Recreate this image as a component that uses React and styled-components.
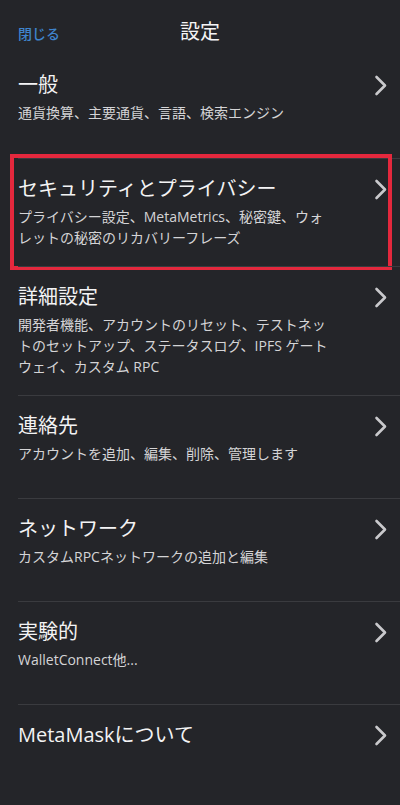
import React from 'react'
import styled, { createGlobalStyle } from 'styled-components'

const GlobalStyle = createGlobalStyle`
  html, body {
    margin: 0;
    padding: 0;
    background: #242529;
  }
  body {
    font-family: "Open Sans", "Noto Sans CJK JP", sans-serif;
    -webkit-font-smoothing: antialiased;
  }
`

const items = [
  { title: '一般', sub: '通貨換算、主要通貨、言語、検索エンジン' },
  {
    title: 'セキュリティとプライバシー',
    sub: 'プライバシー設定、MetaMetrics、秘密鍵、ウォレットの秘密のリカバリーフレーズ',
    marked: true,
  },
  {
    title: '詳細設定',
    sub: '開発者機能、アカウントのリセット、テストネットのセットアップ、ステータスログ、IPFS ゲートウェイ、カスタム RPC',
  },
  { title: '連絡先', sub: 'アカウントを追加、編集、削除、管理します' },
  { title: 'ネットワーク', sub: 'カスタムRPCネットワークの追加と編集' },
  { title: '実験的', sub: 'WalletConnect他...' },
  { title: 'MetaMaskについて' },
]

const Chevron = () => (
  <svg width="14" height="21" viewBox="0 0 14 21" fill="none">
    <polyline
      points="2.5,2 11,10.5 2.5,19"
      stroke="#c9c9cc"
      strokeWidth="2.6"
      strokeLinecap="round"
      strokeLinejoin="round"
    />
  </svg>
)

const App = () => {
  return (
    <>
      <GlobalStyle />
      <Screen>
        <Header>
          <Close>閉じる</Close>
          <HeaderTitle>設定</HeaderTitle>
        </Header>
        <List>
          {items.map((item, i) => (
            <Row key={item.title} $first={i === 0}>
              <Text>
                <Title>{item.title}</Title>
                {item.sub && <Sub>{item.sub}</Sub>}
              </Text>
              <Arrow>
                <Chevron />
              </Arrow>
              {item.marked && <Highlight />}
            </Row>
          ))}
        </List>
      </Screen>
    </>
  )
}

const Screen = styled.div`
  width: 400px;
  min-height: 805px;
  background: #242529;
  color: #f1f1f2;
`

const Header = styled.div`
  position: relative;
  height: 55px;
  display: flex;
  align-items: center;
  justify-content: center;
  padding: 8px 18px 0;
  box-sizing: border-box;
`

const Close = styled.span`
  position: absolute;
  left: 18px;
  top: 24px;
  font-size: 14px;
  line-height: 20px;
  font-weight: 500;
  color: #3f84cc;
`

const HeaderTitle = styled.h1`
  margin: 0;
  font-size: 20px;
  line-height: 26px;
  font-weight: 400;
  color: #f4f4f5;
`

const List = styled.div`
  display: flex;
  flex-direction: column;
`

const Row = styled.div`
  position: relative;
  display: flex;
  align-items: flex-start;
  justify-content: space-between;
  min-height: 103px;
  box-sizing: border-box;
  margin-left: 18px;
  padding: 18px 0;
  border-top: ${p => (p.$first ? 'none' : '1px solid #3a3b3f')};
`

const Text = styled.div`
  display: flex;
  flex-direction: column;
  gap: 5px;
`

const Title = styled.div`
  font-size: 20px;
  line-height: 24px;
  color: #f3f3f4;
`

const Sub = styled.div`
  max-width: 316px;
  font-size: 14px;
  line-height: 21px;
  color: #d4d4d6;
  line-break: strict;
`

const Arrow = styled.div`
  display: flex;
  margin-right: 12px;
  margin-top: 2px;
`

const Highlight = styled.div`
  position: absolute;
  top: -5px;
  left: -8px;
  right: 8px;
  bottom: -4px;
  border: 4px solid #e4283d;
  pointer-events: none;
`

export default App
